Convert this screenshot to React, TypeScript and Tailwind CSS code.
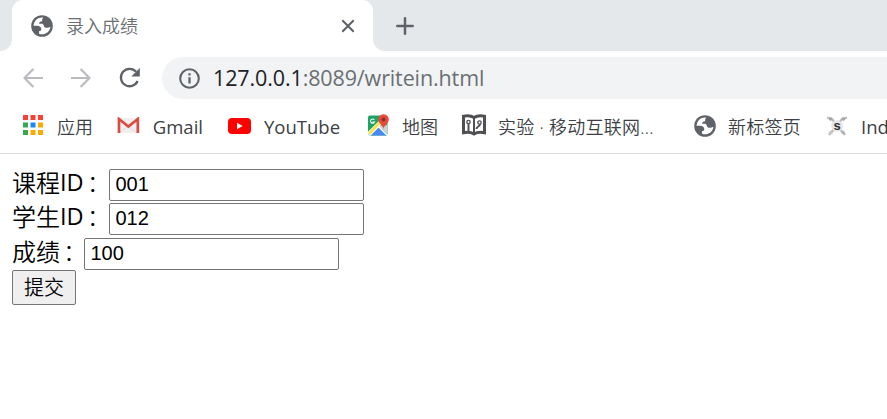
import React from "react";

function Globe() {
  return (
    <svg className="h-[22px] w-[22px] shrink-0" viewBox="0 0 22 22">
      <circle cx="11" cy="11" r="10.8" fill="#5f6368" />
      <path d="M12.300 2.600C7 2 3 5.500 2.600 10.800H6c2.600 0 4.300 1.200 4.300 3.400 0 1.200-1 1.900-2.200 1.900V19c5.900 1.500 10.900-2 11.300-7.200-1 .7-2.200 1-3.400 1-2.300 0-2.900-.9-3.200-2.300-.3-1.300-1.100-1.800-2.300-1.800H8.100c-.1-1.700 1-2.400 3-2.500 0-1.600.2-2.500 1.200-3.600z" fill="#fff" />
    </svg>
  );
}

function Bookmark({ icon, label, className, textClass }: { icon: React.ReactNode; label: string; className: string; textClass: string }) {
  return (
    <div className={`flex shrink-0 items-center ${className}`}>
      {icon}
      <span className={`whitespace-nowrap ${textClass}`}>{label}</span>
    </div>
  );
}

function Field({ label, latin = "", value, labelClass, className }: { label: string; latin?: string; value: string; labelClass: string; className: string }) {
  return (
    <label className={`flex h-8 items-center ${className}`}>
      <span className={`flex h-8 shrink-0 whitespace-nowrap text-[24px] leading-[27px] font-[350] ${labelClass}`}>
        {label}
        <span className="text-[23.500px] font-normal">{latin}</span>
        <span className="ml-[3px] font-light">：</span>
      </span>
      <input defaultValue={value} className="h-8 w-[255px] rounded-[2px] border border-[#767676] bg-white pt-0 pr-[5px] pb-[1px] pl-[5.500px] font-['Liberation_Sans',sans-serif] text-[20px] leading-6 text-black outline-none" />
    </label>
  );
}

export default function App() {
  return (
    <div className="h-[419px] w-[887px] overflow-hidden bg-white font-['Open_Sans','Noto_Sans_CJK_SC',sans-serif]">
      <div className="flex h-[51px] bg-white">
        <div className="w-3 rounded-br-[12px] bg-[#e4e8eb]" />
        <div className="w-[361px] bg-[#e4e8eb]">
          <div className="flex h-full items-center rounded-t-[11px] bg-white pl-[19px]">
            <Globe />
            <span className="ml-[13px] w-[275px] pt-px text-[18px] font-[350] text-[#6b6f73]">录入成绩</span>
            <svg className="h-[14px] w-[14px]" viewBox="0 0 14 14" stroke="#5f6368" strokeWidth="2.1"><path d="M1.300 1.300l11.400 11.400m0-11.400L1.300 12.700" /></svg>
          </div>
        </div>
        <div className="flex flex-1 items-center rounded-bl-[12px] bg-[#e4e8eb] pl-[23px]">
          <svg className="h-[18px] w-[18px]" viewBox="0 0 18 18" stroke="#5f6368" strokeWidth="2.500" strokeLinecap="round"><path d="M9 1.300v15.400M1.300 9h15.400" /></svg>
        </div>
      </div>
      <div className="flex h-[51px] items-center pt-[3px] pl-[23px]">
        <svg className="h-5 w-5" viewBox="0 0 20 20" fill="none" stroke="#b9bbbe" strokeWidth="2.200"><path d="M20 10H1.800M10.400 1L1.500 10l8.900 9" /></svg>
        <svg className="ml-7 h-5 w-5" viewBox="0 0 20 20" fill="none" stroke="#b9bbbe" strokeWidth="2.200"><path d="M0 10h18.200M9.600 1l8.900 9-8.900 9" /></svg>
        <svg className="ml-7 h-[22px] w-[22px]" viewBox="0 0 22 22"><path d="M17.200 4.800A8.700 8.700 0 1 0 18.600 14" fill="none" stroke="#5f6368" strokeWidth="2.300" /><path d="M20.800 1v8.500h-8.500z" fill="#5f6368" /></svg>
        <div className="ml-[21px] flex h-[42px] flex-1 items-center rounded-l-full bg-[#f1f3f4] pl-[17px]">
          <svg className="h-[21px] w-[21px]" viewBox="0 0 21 21"><circle cx="10.500" cy="10.500" r="9.300" fill="none" stroke="#5f6368" strokeWidth="2.100" /><path d="M10.500 9.300v6.200M10.500 5.300v2.300" stroke="#5f6368" strokeWidth="2.300" /></svg>
          <span className="ml-[13px] text-[21.500px] tracking-[-0.120px] text-[#6b6f73]"><span className="text-[#202124]">127.0.0.1</span>:8089/writein.html</span>
        </div>
      </div>
      <div className="flex h-[52px] items-center overflow-hidden border-b border-[#d9dbdd] text-[18.500px] text-[#3c4043]">
        <Bookmark className="w-[94px] pl-[23px]" textClass="ml-[14px] font-[350] text-[18px]" label="应用" icon={
          <svg className="relative -top-[3px] h-5 w-5" viewBox="0 0 20 20"><path d="M0 0h5v5H0zm7.500 0h5v5h-5zM15 0h5v5h-5z" fill="#f44336" /><path d="M0 7.500h5v5H0zM0 15h5v5H0z" fill="#34a853" /><path d="M7.500 7.500h5v5h-5z" fill="#1a88f5" /><path d="M15 7.500h5v5h-5zM7.500 15h5v5h-5zM15 15h5v5h-5z" fill="#f9ab00" /></svg>} />
        <Bookmark className="w-[109px] pl-[23px]" textClass="ml-[13px] relative -top-px" label="Gmail" icon={
          <svg className="relative -top-[2px] h-[17px] w-[23px]" viewBox="0 0 23 17"><path d="M1 1h21v15H1z" fill="#efefef" /><path d="M2 16l9-7 9 7" fill="none" stroke="#dcdcdc" /><path d="M2 16V2l9.500 7.500L21 2v14" fill="none" stroke="#dc4b40" strokeWidth="2.700" /></svg>} />
        <Bookmark className="w-[138px] pl-[25px]" textClass="ml-[13px] relative -top-px" label="YouTube" icon={
          <svg className="relative -top-[2px] h-[16px] w-[23px]" viewBox="0 0 23 16"><rect width="23" height="16" rx="4" fill="#f00" /><path d="M9 4.800v6.400l5.600-3.200z" fill="#fff" /></svg>} />
        <Bookmark className="w-[97px] pl-[26px]" textClass="ml-[13px] font-[350] text-[18px]" label="地图" icon={
          <svg className="relative -top-[3px] h-[22px] w-[22px]" viewBox="0 0 22 22"><rect x="1" y="1.500" width="19.500" height="20" rx="2" fill="#1ea362" /><path d="M2 21.500L11 12l9 9.500z" fill="#4a89f3" /><path d="M20.500 11v9l-9-8z" fill="#d2d2d2" /><path d="M1.500 20.500L17.500 4.500" stroke="#fff" strokeWidth="4.500" /><path d="M2 20L16 5" stroke="#ffe047" strokeWidth="2.700" /><path d="M11 12l9 9" stroke="#fff" strokeWidth="1.500" /><path d="M7.300 5.800A2.100 2.100 0 1 0 7.500 8H5.500" fill="none" stroke="#fff" strokeWidth="1.100" /><path d="M16.500 15.500c0-4-5.300-6-5.300-10a5.300 5.300 0 0 1 10.600 0c0 4-5.300 6-5.300 10z" fill="#e84b3c" /><circle cx="16.500" cy="5.500" r="2" fill="#8d3029" /></svg>} />
        <Bookmark className="w-[232px] pl-6" textClass="ml-[12px] font-[350] text-[18px] tracking-[0.250px]" label="实验 · 移动互联网..." icon={
          <svg className="relative -top-[3px] h-[22px] w-6" viewBox="0 0 24 22"><path d="M1.500 2.200Q8 .8 12 3.600 16 .8 22.500 2.200v16.500Q16 17.500 12 20 8 17.500 1.500 18.700z" fill="#fff" stroke="#505054" strokeWidth="3" /><path d="M12 3v17M6.500 10v7M18 10c0 3-3.500 2-3.500 5" fill="none" stroke="#505054" strokeWidth="2" /><circle cx="6.500" cy="8" r="1.700" fill="none" stroke="#505054" strokeWidth="1.300" /><circle cx="17.500" cy="8.500" r="1.700" fill="none" stroke="#505054" strokeWidth="1.300" /></svg>} />
        <Bookmark className="w-[132px] pl-6" textClass="ml-[12px] font-[350] text-[18px] tracking-[0.250px]" label="新标签页" icon={<span className="relative -top-[2px] flex"><Globe /></span>} />
        <Bookmark className="pl-6" textClass="ml-[13px] relative -top-px" label="Ind" icon={
          <svg className="relative -top-[2px] h-[22px] w-[22px]" viewBox="0 0 22 22"><path d="M1 2.500l5 1.500 3 4M21 2.500l-5 1.500-3 4M3 20l2-3 4-3M19 20l-2-3-4-3" fill="none" stroke="#bdbdbd" strokeWidth="2.300" /><circle cx="4.500" cy="4" r="1.800" fill="#a6a6a6" /><circle cx="17.500" cy="4" r="1.800" fill="#a6a6a6" /><circle cx="5" cy="17.500" r="1.800" fill="#c4c4c4" /><circle cx="17" cy="17.500" r="1.800" fill="#b4b4b4" /><circle cx="11" cy="11" r="5.800" fill="#e6e6e6" /><text x="7.500" y="15" fontSize="13" fontWeight="700" fontFamily="Liberation Sans" fill="#333">s</text></svg>} />
      </div>
      <form className="pt-[15px] pl-3 text-black" onSubmit={(e) => e.preventDefault()}>
        <Field label="课程" latin="ID" value="001" labelClass="w-[97px]" className="" />
        <Field label="学生" latin="ID" value="012" labelClass="w-[97px]" className="mt-[2px]" />
        <Field label="成绩" value="100" labelClass="w-[72px]" className="mt-[3px]" />
        <button className="block h-[35px] w-16 rounded-[2px] border border-[#767676] bg-[#efefef] text-center text-[20px] leading-[33px] font-[350]">提交</button>
      </form>
    </div>
  );
}
